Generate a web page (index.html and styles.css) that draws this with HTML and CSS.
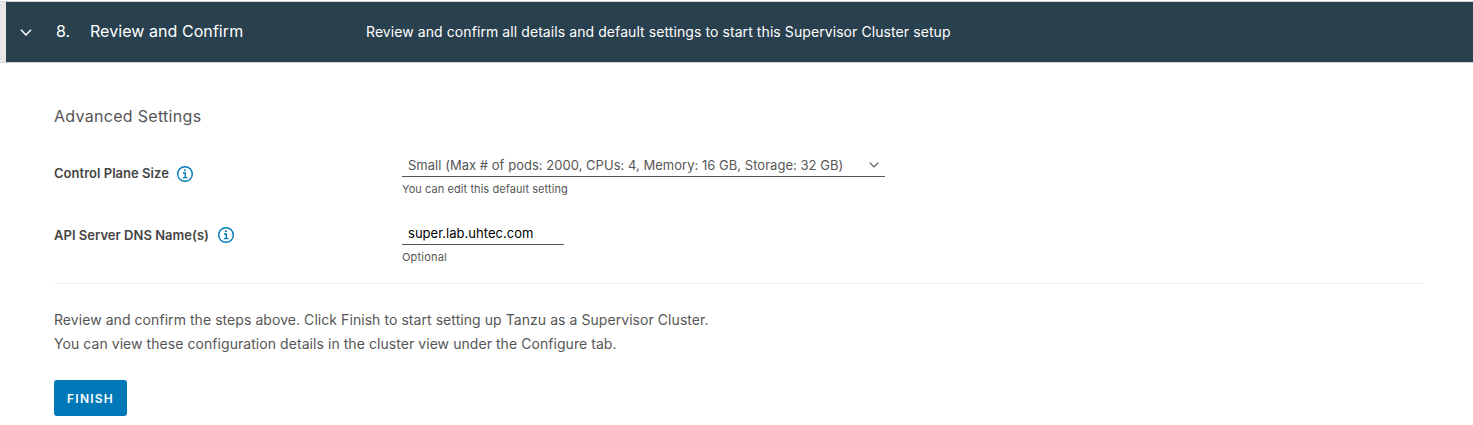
FILE: index.html
```html
<!DOCTYPE html>
<html lang="en">
<head>
<meta charset="utf-8">
<title>Review and Confirm</title>
<link rel="stylesheet" href="styles.css">
</head>
<body>
<header class="step-header">
  <svg class="step-caret" viewBox="0 0 12 8"><path d="M1 1.8 6 7 11 1.8"/></svg>
  <span class="step-number">8.</span>
  <h1 class="step-title">Review and Confirm</h1>
  <p class="step-description">Review and confirm all details and default settings to start this Supervisor Cluster setup</p>
</header>
<main class="step-body">
  <h2 class="section-title">Advanced Settings</h2>
  <div class="field field-size">
    <div class="field-label"><span class="label-text">Control Plane Size</span>
      <svg class="info" viewBox="0 0 18 18"><circle cx="9" cy="9" r="7.3"/><path d="M7 8h2.3v4.5M6.8 12.6h4.6"/><circle class="dot" cx="9" cy="5.3" r="1"/></svg>
    </div>
    <div class="control">
      <div class="select"><span>Small (Max # of pods: 2000, CPUs: 4, Memory: 16 GB, Storage: 32 GB)</span>
        <svg class="select-caret" viewBox="0 0 10 6"><path d="M.7.7 5 5 9.3.7"/></svg>
      </div>
      <div class="help">You can edit this default setting</div>
    </div>
  </div>
  <div class="field field-dns">
    <div class="field-label"><span class="label-text">API Server DNS Name(s)</span>
      <svg class="info" viewBox="0 0 18 18"><circle cx="9" cy="9" r="7.3"/><path d="M7 8h2.3v4.5M6.8 12.6h4.6"/><circle class="dot" cx="9" cy="5.3" r="1"/></svg>
    </div>
    <div class="control">
      <div class="input">super.lab.uhtec.com</div>
      <div class="help help-optional">Optional</div>
    </div>
  </div>
  <hr class="divider">
  <p class="summary">Review and confirm the steps above. Click Finish to start setting up Tanzu as a Supervisor Cluster.<br>You can view these configuration details in the cluster view under the Configure tab.</p>
  <button class="finish">FINISH</button>
</main>
</body>
</html>
```
FILE: styles.css
```css
* { box-sizing: border-box; }
body { margin: 0; background: #fff; color: #565656; font-family: Inter, "Open Sans", sans-serif; }
h1, h2, p { margin: 0; font-weight: 400; white-space: nowrap; }
svg { display: block; flex: none; fill: none; }

.step-header {
  display: flex; align-items: center; height: 62px; margin-top: 1px; padding-left: 14px;
  border-top: 1px solid #ccc; border-bottom: 1px solid #ccc; border-left: 6px solid #e8e8e8;
  background: #29404e; background-clip: padding-box; color: #fff;
}
.step-caret { width: 12px; height: 8px; stroke: #fff; stroke-width: 1.5; }
.step-number { width: 34px; margin-left: 24px; font-size: 16px; line-height: 20px; }
.step-title { width: 276px; font-size: 16px; line-height: 20px; letter-spacing: 0.06px; }
.step-number, .step-title { padding-bottom: 2px; }
.step-description { padding-bottom: 1px; font-size: 14px; letter-spacing: 0.08px; }

.step-body { padding: 41px 51px 0 54px; }
.section-title { height: 25px; font-size: 16px; line-height: 24px; letter-spacing: 0.3px; }

.field { display: flex; }
.field-size { height: 68px; margin-top: 24px; }
.field-dns { height: 62px; }
.field-label {
  display: flex; gap: 7px; width: 348px; height: 18px; margin-top: 12px;
  color: #454545; font-size: 13px; font-weight: 600; line-height: 16px; white-space: nowrap;
}
.field-dns .field-label { gap: 8px; margin-top: 5px; line-height: 19px; }
.label-text { letter-spacing: 0.03px; }
.info { width: 18px; height: 18px; stroke: #0079b8; stroke-width: 1.4; }
.dot { fill: #0079b8; stroke: none; }

.select, .input {
  display: flex; align-items: center; height: 24px; padding: 0 6px;
  border-bottom: 1px solid #565656; font-size: 13px; letter-spacing: 0.03px; white-space: nowrap;
}
.select { justify-content: space-between; width: 483px; }
.select-caret { width: 10px; height: 6px; stroke: #565656; stroke-width: 1.2; }
.input { width: 162px; color: #000; }
.help { height: 24px; font-size: 11px; line-height: 24px; letter-spacing: 0.07px; }
.help-optional { letter-spacing: 0.2px; }

.divider { height: 1px; margin: 0; border: 0; background: #eee; }
.summary { margin-top: 24px; font-size: 14px; line-height: 24px; letter-spacing: 0.06px; }
.finish {
  display: flex; align-items: center; justify-content: center; width: 73px; height: 36px;
  margin-top: 24px; padding: 1px 0 0; border: 0; border-radius: 3px;
  background: #0079b8; color: #fff; font-family: inherit; font-size: 12px; font-weight: 600; letter-spacing: 1.2px;
}
```
